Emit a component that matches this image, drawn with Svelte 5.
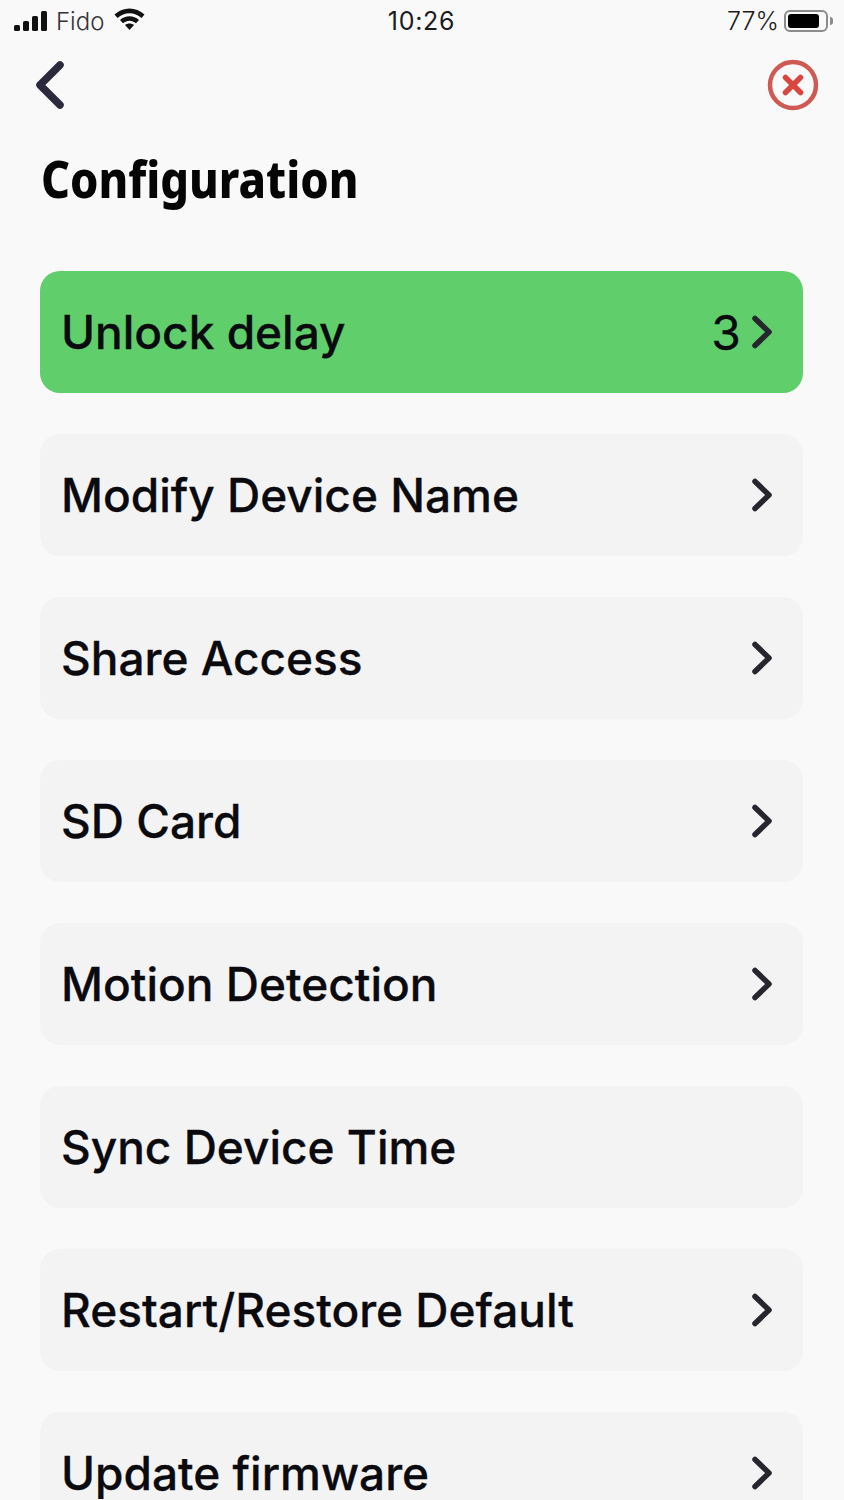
<script lang="ts">
  const items = [
    { label: 'Unlock delay', value: '3', active: true, arrow: true },
    { label: 'Modify Device Name', arrow: true },
    { label: 'Share Access', arrow: true },
    { label: 'SD Card', arrow: true },
    { label: 'Motion Detection', arrow: true },
    { label: 'Sync Device Time', arrow: false },
    { label: 'Restart/Restore Default', arrow: true },
    { label: 'Update firmware', arrow: true },
  ];
</script>

<div class="screen">
  <div class="status">
    <div class="status-left">
      <svg class="signal" width="35" height="20" viewBox="0 0 35 20">
        <rect x="0" y="14" width="6" height="6" rx="1.5" />
        <rect x="9" y="10" width="6" height="10" rx="1.5" />
        <rect x="18" y="5" width="6" height="15" rx="1.5" />
        <rect x="27" y="0" width="6" height="20" rx="1.5" />
      </svg>
      <span>Fido</span>
      <svg class="wifi" width="31" height="22" viewBox="0 0 31 22">
        <path d="M0.5 6.5C9 -1.5 22 -1.5 30.5 6.5L27.5 10C20.5 3.5 10.5 3.5 3.5 10Z" />
        <path d="M6 12C11.500 7 19.500 7 25 12L22 15.300C18 11.800 13 11.800 9 15.300Z" />
        <path d="M11 17C13.500 15 17.500 15 20 17L15.500 22Z" />
      </svg>
    </div>
    <span class="time">10:26</span>
    <div class="status-right">
      <span>77%</span>
      <div class="battery"><div class="level"></div></div>
      <div class="nub"></div>
    </div>
  </div>

  <div class="nav">
    <svg width="32" height="50" viewBox="0 0 32 50" fill="none">
      <path d="M26 5L6 25L26 45" stroke="#2b2a3c" stroke-width="7.500" stroke-linecap="round" stroke-linejoin="round" />
    </svg>
    <svg class="close" width="52" height="52" viewBox="0 0 52 52" fill="none">
      <circle cx="26" cy="26" r="23" stroke="#cf5a54" stroke-width="4.500" />
      <path d="M18.500 18.500L33.500 33.500M33.500 18.500L18.500 33.500" stroke="#d9453f" stroke-width="5.500" stroke-linecap="round" />
    </svg>
  </div>

  <h1>Configuration</h1>

  <div class="list">
    {#each items as item}
      <div class="row" class:active={item.active}>
        <span class="label">{item.label}</span>
        {#if item.value}
          <span class="value">{item.value}</span>
        {/if}
        {#if item.arrow}
          <svg class="chevron" width="22" height="34" viewBox="0 0 22 34" fill="none">
            <path d="M4 3.500L18 17L4 30.500" stroke="#26262f" stroke-width="5.500" stroke-linecap="round" stroke-linejoin="round" />
          </svg>
        {/if}
      </div>
    {/each}
  </div>
</div>

<style>
  :global(body) {
    margin: 0;
    background: #f9f9f9;
  }

  .screen {
    height: 1500px;
    overflow: hidden;
    background: #f9f9f9;
    font-family: Inter, "Liberation Sans", sans-serif;
    color: #0b0b0f;
  }

  .status {
    display: grid;
    grid-template-columns: 1fr auto 1fr;
    align-items: center;
    height: 42px;
    padding: 0 11px 0 14px;
    font-size: 24px;
    color: #1c1c1c;
  }

  .status-left {
    display: flex;
    align-items: center;
    gap: 7px;
    color: #333;
    font-weight: 300;
  }

  .signal rect,
  .wifi path {
    fill: #111;
  }

  .wifi {
    margin-left: 3px;
    margin-bottom: 4px;
  }

  .time {
    margin-left: -4px;
    font-size: 25px;
    font-weight: 400;
    letter-spacing: 0.7px;
  }

  .status-right {
    display: flex;
    align-items: center;
    justify-content: flex-end;
    gap: 5px;
    font-size: 25px;
    font-weight: 300;
  }

  .battery {
    box-sizing: border-box;
    width: 44px;
    height: 22px;
    padding: 2px;
    border: 2px solid #8b8b8b;
    border-radius: 6px;
  }

  .level {
    width: 31px;
    height: 14px;
    border-radius: 3px;
    background: #000;
  }

  .nub {
    width: 3px;
    height: 8px;
    margin-left: -3px;
    border-radius: 0 3px 3px 0;
    background: #8b8b8b;
  }

  .nav {
    display: flex;
    align-items: center;
    justify-content: space-between;
    height: 54px;
    padding: 16px 25px 0 34px;
  }

  h1 {
    margin: 34px 0 0 41px;
    font-family: "Noto Sans", sans-serif;
    font-size: 52px;
    font-weight: 800;
    line-height: 64px;
    color: #050505;
    white-space: nowrap;
    transform: scaleX(0.868);
    transform-origin: left center;
  }

  .list {
    display: flex;
    flex-direction: column;
    gap: 41px;
    margin: 61px 41px 0 40px;
  }

  .row {
    display: flex;
    flex-shrink: 0;
    align-items: center;
    height: 122px;
    padding: 0 30px 0 21px;
    border-radius: 20px;
    background: #f3f3f4;
    font-size: 46px;
    font-weight: 500;
    -webkit-text-stroke: 0.3px currentColor;
  }

  .row.active {
    background: #60cf6b;
  }

  .label {
    flex: 1;
    white-space: nowrap;
  }

  .value {
    margin-right: 10px;
    font-size: 48px;
    font-weight: 400;
  }
</style>
